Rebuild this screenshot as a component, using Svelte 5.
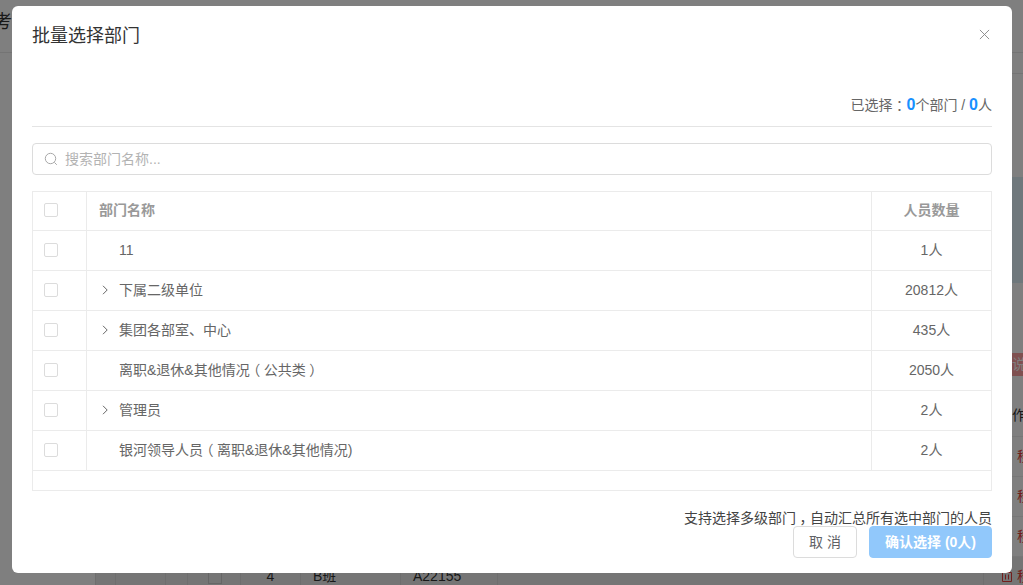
<script lang="ts">
	const departments = [
		{ name: '11', count: '1人', expandable: false },
		{ name: '下属二级单位', count: '20812人', expandable: true },
		{ name: '集团各部室、中心', count: '435人', expandable: true },
		{ name: '离职&退休&其他情况（公共类）', count: '2050人', expandable: false },
		{ name: '管理员', count: '2人', expandable: true },
		{ name: '银河领导人员（离职&退休&其他情况)', count: '2人', expandable: false }
	];

	const pageRows = [
		{ no: '', group: '', code: '' },
		{ no: '', group: '', code: '' },
		{ no: '', group: '', code: '' },
		{ no: '4', group: 'B班', code: 'A22155' }
	];

	// full-width punctuation sits centred in the reference font, so nudge it
	const split = (text: string) => text.split(/([（），：])/).filter(Boolean);
	const isPunct = (part: string) => /^[（），：]$/.test(part);
</script>

{#snippet text(value: string)}
	{#each split(value) as part}
		{#if isPunct(part)}<span class={part === '（' ? 'open' : 'shut'}>{part}</span>{:else}{part}{/if}
	{/each}
{/snippet}

<div class="page">
	<div class="page-top"><span class="page-title">考</span></div>
	<div class="content">
		<div class="tabs"></div>
		<div class="band"></div>
		<div class="tag-row"><span class="tag">说明</span></div>
		<div class="page-head"><span>操作</span></div>
		{#each pageRows as row, i}
			<div class="page-row" class:last={i === 3}>
				<span></span>
				<span></span>
				<span></span>
				<span class="page-check">{#if row.no}<i></i>{/if}</span>
				<span class="page-no">{row.no}</span>
				<span class="page-text">{row.group}</span>
				<span class="page-text">{row.code}</span>
				<span></span>
				<span class="page-action">
					<svg viewBox="0 0 10 10" aria-hidden="true">
						<path d="M.5.5h9v9h-9zM3.5 2.5v5M6.5 2.5v5" />
					</svg>
					移除
				</span>
			</div>
		{/each}
	</div>
</div>

<div class="overlay">
	<div class="modal">
		<div class="modal-head">
			<h2>批量选择部门</h2>
			<svg class="close" viewBox="0 0 12 12" aria-hidden="true">
				<path d="M1 1l10 10M11 1L1 11" />
			</svg>
		</div>

		<div class="summary">
			已选择<span class="shut">：</span><b>0</b>个部门 / <b>0</b>人
		</div>

		<div class="search">
			<svg viewBox="0 0 14 14" aria-hidden="true">
				<circle cx="6.5" cy="6.5" r="5.2" />
				<path d="M10.4 10.4l2.4 2.4" />
			</svg>
			<span>搜索部门名称...</span>
		</div>

		<div class="table">
			<div class="row head">
				<div class="cell check"><i class="box"></i></div>
				<div class="cell name">部门名称</div>
				<div class="cell count">人员数量</div>
			</div>
			{#each departments as dept}
				<div class="row">
					<div class="cell check"><i class="box"></i></div>
					<div class="cell name">
						<span class="arrow">
							{#if dept.expandable}
								<svg viewBox="0 0 10 10" aria-hidden="true"><path d="M3 .8l4.2 4.2L3 9.2" /></svg>
							{/if}
						</span>
						<span>{@render text(dept.name)}</span>
					</div>
					<div class="cell count">{dept.count}</div>
				</div>
			{/each}
			<div class="row filler"></div>
		</div>

		<p class="hint">{@render text('支持选择多级部门，自动汇总所有选中部门的人员')}</p>

		<div class="actions">
			<button class="cancel">取 消</button>
			<button class="confirm">确认选择 (0人)</button>
		</div>
	</div>
</div>

<style>
	:global(body) {
		font-family: 'Liberation Sans', 'Noto Sans CJK SC', sans-serif;
		overflow: hidden;
	}

	.page {
		height: 585px;
		background: #fff;
		overflow: hidden;
		color: #333;
		font-size: 14px;
	}

	.page-top {
		height: 52px;
		border-bottom: 1px solid #e8e8e8;
	}

	.page-title {
		display: block;
		margin-left: -6px;
		padding-top: 7px;
		font-size: 18px;
		color: #333;
	}

	.content {
		padding-left: 95px;
	}

	.tabs {
		height: 20px;
		border-bottom: 1px solid #e8e8e8;
	}

	.band {
		height: 106px;
		margin: 103px 0 70px;
		background: #dff0f8;
	}

	.tag-row {
		display: flex;
		justify-content: flex-end;
		height: 23px;
	}

	.tag {
		width: 11px;
		background: #ffa0a0;
		color: #fff;
		font-size: 14px;
		line-height: 23px;
		white-space: nowrap;
		overflow: hidden;
	}

	.page-head {
		box-sizing: border-box;
		height: 61px;
		padding: 28px 0 0 903px;
		white-space: nowrap;
		overflow: hidden;
		border-bottom: 1px solid #eee;
	}

	.page-row {
		box-sizing: border-box;
		display: grid;
		grid-template-columns: 20px 50px 22px 53px 60px 100px 97px 486px 1fr;
		height: 40px;
		border-bottom: 1px solid #eee;
		line-height: 39px;
		white-space: nowrap;
	}

	.page-row.last {
		background: #ebebeb;
	}

	.page-row span {
		border-left: 1px solid #ddd;
		min-width: 0;
	}

	.page-check {
		display: flex;
		align-items: center;
		justify-content: center;
	}

	.page-check i {
		box-sizing: border-box;
		width: 14px;
		height: 14px;
		margin-left: 2px;
		border: 1px solid #ccc;
	}

	.page-no {
		text-align: center;
	}

	.page-text {
		padding-left: 12px;
	}

	.page-action {
		display: flex;
		align-items: center;
		gap: 5px;
		padding-left: 18px;
		color: #e23c39;
	}

	.page-action svg {
		flex: none;
		width: 10px;
		height: 10px;
		fill: none;
		stroke: #e23c39;
		stroke-width: 1;
	}

	.overlay {
		position: fixed;
		inset: 0;
		background: rgba(0, 0, 0, 0.5);
		padding: 6px 0 0 12px;
	}

	.modal {
		box-sizing: border-box;
		width: 1000px;
		height: 567px;
		padding: 0 20px;
		background: #fff;
		border-radius: 6px;
		color: #666;
		font-size: 14px;
	}

	.modal-head {
		display: flex;
		justify-content: space-between;
		align-items: center;
		height: 55px;
	}

	h2 {
		margin: 0;
		font-size: 18px;
		font-weight: 400;
		color: #333;
	}

	.close {
		width: 11px;
		height: 11px;
		margin: 1px 2px 0 0;
		fill: none;
		stroke: #888;
		stroke-width: 1;
	}

	.summary {
		box-sizing: border-box;
		height: 66px;
		padding-top: 33px;
		text-align: right;
		line-height: 22px;
		border-bottom: 1px solid #e4e4e4;
	}

	.summary b {
		font-size: 16px;
		color: #1890ff;
	}

	.open,
	.shut {
		display: inline-block;
	}

	.open {
		transform: translateX(-0.25em);
	}

	.shut {
		transform: translateX(0.25em);
	}

	.search {
		box-sizing: border-box;
		display: flex;
		align-items: center;
		gap: 7px;
		height: 32px;
		margin-top: 16px;
		padding: 0 0 2px 11px;
		border: 1px solid #dcdcdc;
		border-radius: 4px;
		color: #b3b3b3;
	}

	.search svg {
		width: 14px;
		height: 14px;
		margin-top: 2px;
		fill: none;
		stroke: #a8a8a8;
		stroke-width: 1;
	}

	.table {
		margin-top: 16px;
		border: 1px solid #ebebeb;
		border-bottom: 0;
	}

	.row {
		box-sizing: border-box;
		display: flex;
		height: 40px;
		border-bottom: 1px solid #ebebeb;
	}

	.row.head {
		height: 39px;
		font-weight: 700;
		color: #999;
	}

	.row.filler {
		height: 20px;
	}

	.cell {
		display: flex;
		align-items: center;
		padding-bottom: 2px;
		line-height: 20px;
	}

	.check {
		box-sizing: border-box;
		flex: 0 0 54px;
		padding: 0 0 2px 11px;
		border-right: 1px solid #ebebeb;
	}

	.box {
		box-sizing: border-box;
		width: 14px;
		height: 14px;
		border: 1px solid #dcdcdc;
		border-radius: 2px;
	}

	.name {
		flex: 1;
		padding-left: 12px;
	}

	.arrow {
		display: flex;
		align-items: center;
		width: 20px;
	}

	.arrow svg {
		width: 10px;
		height: 10px;
		margin-left: 1px;
		fill: none;
		stroke: #666;
		stroke-width: 1;
	}

	.count {
		box-sizing: border-box;
		flex: 0 0 120px;
		justify-content: center;
		border-left: 1px solid #ebebeb;
	}

	.hint {
		margin: 18px 0 -1px;
		text-align: right;
		font-size: 14px;
		line-height: 18px;
		color: #444;
	}

	.actions {
		display: flex;
		justify-content: flex-end;
		gap: 12px;
	}

	button {
		box-sizing: border-box;
		height: 32px;
		padding: 0 0 2px;
		border-radius: 4px;
		font: inherit;
	}

	.cancel {
		width: 64px;
		background: #fff;
		border: 1px solid #dcdcdc;
		color: #606266;
	}

	.confirm {
		width: 123px;
		background: #91c8fb;
		border: 1px solid #91c8fb;
		color: #fff;
		font-weight: 700;
	}
</style>
